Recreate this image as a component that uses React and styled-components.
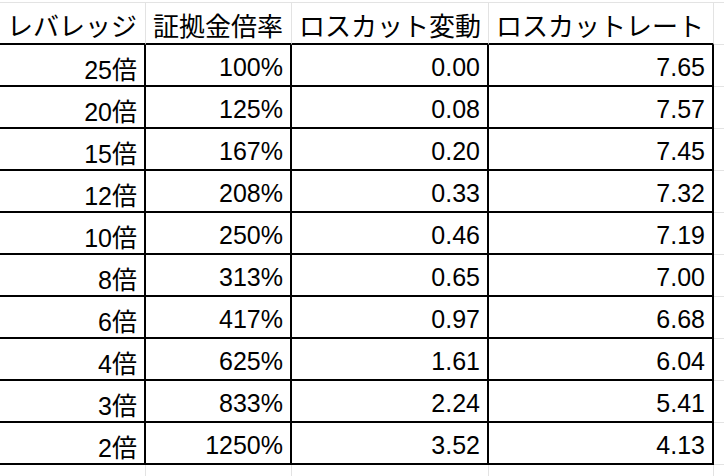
import styled, { createGlobalStyle } from "styled-components";

const rows = [
  ["25倍", "100%", "0.00", "7.65"],
  ["20倍", "125%", "0.08", "7.57"],
  ["15倍", "167%", "0.20", "7.45"],
  ["12倍", "208%", "0.33", "7.32"],
  ["10倍", "250%", "0.46", "7.19"],
  ["8倍", "313%", "0.65", "7.00"],
  ["6倍", "417%", "0.97", "6.68"],
  ["4倍", "625%", "1.61", "6.04"],
  ["3倍", "833%", "2.24", "5.41"],
  ["2倍", "1250%", "3.52", "4.13"],
];

const headers = ["レバレッジ", "証拠金倍率", "ロスカット変動", "ロスカットレート"];

export default function App() {
  return (
    <>
      <Global />
      <Sheet>
        {headers.map((h) => (
          <Head key={h}>{h}</Head>
        ))}
        <Head $blank />
        {rows.map((r, i) => (
          <Row key={i} r={r} />
        ))}
        {[0, 1, 2, 3, 4].map((c) => (
          <Spare key={c} />
        ))}
      </Sheet>
    </>
  );
}

function Row({ r }) {
  return (
    <>
      {r.map((v, j) => (
        <Cell key={j}>{v}</Cell>
      ))}
      <Empty />
    </>
  );
}

const Global = createGlobalStyle`
  html, body {
    margin: 0;
    padding: 0;
    background: #fff;
    overflow: hidden;
  }
  body {
    font-family: "Liberation Sans", "Noto Sans CJK JP", sans-serif;
    color: #000;
  }
`;

const Sheet = styled.div`
  display: grid;
  grid-template-columns: 146px 146px 197px 225px 1fr;
  grid-template-rows: 43px repeat(10, 42px) 20px;
  width: 724px;
  height: 476px;
  padding-top: 2px;
  box-sizing: border-box;
  font-size: 25px;
`;

const Head = styled.div`
  box-sizing: border-box;
  border-top: 1px solid #e3e3e3;
  border-right: 1px solid #e3e3e3;
  border-bottom: ${(p) => (p.$blank ? "1px solid #e3e3e3" : "2px solid #000")};
  display: flex;
  align-items: center;
  padding: 3px 6px 0 7px;
  font-size: 26px;
  white-space: nowrap;
  overflow: hidden;
`;

const Cell = styled.div`
  box-sizing: border-box;
  border-right: 2px solid #000;
  border-bottom: 2px solid #000;
  display: flex;
  align-items: center;
  justify-content: flex-end;
  padding: 5px 7px 0;
  white-space: nowrap;
`;

const Empty = styled.div`
  box-sizing: border-box;
  border-bottom: 1px solid #e3e3e3;
`;

const Spare = styled.div`
  box-sizing: border-box;
  border-right: 1px solid #e3e3e3;
`;
